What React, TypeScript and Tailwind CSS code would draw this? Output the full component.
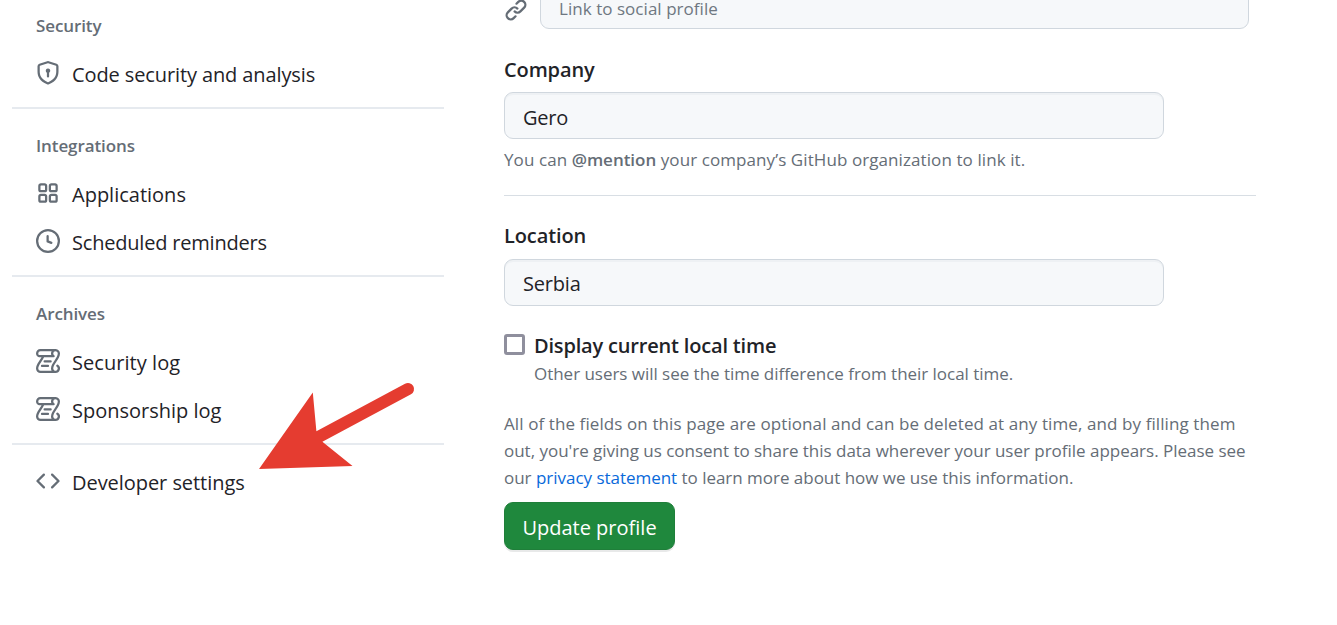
import type { ReactNode } from "react";

const paths = {
  shield:
    "m8.533.133 5.25 1.68A1.75 1.75 0 0 1 15 3.48V7c0 1.566-.32 3.182-1.303 4.682-.983 1.498-2.585 2.813-5.032 3.855a1.697 1.697 0 0 1-1.33 0c-2.447-1.042-4.049-2.357-5.032-3.855C1.32 10.182 1 8.566 1 7V3.48a1.75 1.75 0 0 1 1.217-1.667l5.25-1.68a1.748 1.748 0 0 1 1.066 0Zm-.61 1.429.001.001-5.25 1.68a.251.251 0 0 0-.174.237V7c0 1.36.275 2.666 1.057 3.859.784 1.194 2.121 2.342 4.366 3.298a.196.196 0 0 0 .154 0c2.245-.957 3.582-2.103 4.366-3.297C13.225 9.666 13.5 8.358 13.5 7V3.48a.25.25 0 0 0-.174-.238l-5.25-1.68a.25.25 0 0 0-.153 0ZM9.5 6.5c0 .536-.286 1.032-.75 1.3v2.45a.75.75 0 0 1-1.5 0V7.8A1.5 1.5 0 1 1 9.5 6.5Z",
  apps: "M1.5 3.25c0-.966.784-1.75 1.75-1.75h2.5c.966 0 1.75.784 1.75 1.75v2.5A1.75 1.75 0 0 1 5.75 7.5h-2.5A1.75 1.75 0 0 1 1.5 5.75Zm7 0c0-.966.784-1.75 1.75-1.75h2.5c.966 0 1.75.784 1.75 1.75v2.5a1.75 1.75 0 0 1-1.75 1.75h-2.5A1.75 1.75 0 0 1 8.5 5.75Zm-7 7c0-.966.784-1.75 1.75-1.75h2.5c.966 0 1.75.784 1.75 1.75v2.5a1.75 1.75 0 0 1-1.75 1.75h-2.5a1.75 1.75 0 0 1-1.75-1.75Zm7 0c0-.966.784-1.75 1.75-1.75h2.5c.966 0 1.75.784 1.75 1.75v2.5a1.75 1.75 0 0 1-1.75 1.75h-2.5a1.75 1.75 0 0 1-1.75-1.75ZM3.25 3a.25.25 0 0 0-.25.25v2.5c0 .138.112.25.25.25h2.5A.25.25 0 0 0 6 5.75v-2.5A.25.25 0 0 0 5.75 3Zm7 0a.25.25 0 0 0-.25.25v2.5c0 .138.112.25.25.25h2.5a.25.25 0 0 0 .25-.25v-2.5a.25.25 0 0 0-.25-.25Zm-7 7a.25.25 0 0 0-.25.25v2.5c0 .138.112.25.25.25h2.5a.25.25 0 0 0 .25-.25v-2.5a.25.25 0 0 0-.25-.25Zm7 0a.25.25 0 0 0-.25.25v2.5c0 .138.112.25.25.25h2.5a.25.25 0 0 0 .25-.25v-2.5a.25.25 0 0 0-.25-.25Z",
  clock:
    "M8 0a8 8 0 1 1 0 16A8 8 0 0 1 8 0ZM1.5 8a6.5 6.5 0 1 0 13 0 6.5 6.5 0 0 0-13 0Zm7-3.25v2.992l2.028.812a.75.75 0 0 1-.557 1.392l-2.5-1A.751.751 0 0 1 7 8.25v-3.5a.75.75 0 0 1 1.5 0Z",
  log: "M5 8.25a.75.75 0 0 1 .75-.75h4a.75.75 0 0 1 0 1.5h-4A.75.75 0 0 1 5 8.25ZM4 10.5A.75.75 0 0 0 4 12h4a.75.75 0 0 0 0-1.5H4ZM13-.005c1.654 0 3 1.328 3 3 0 .982-.338 1.933-.783 2.818-.443.879-1.028 1.758-1.582 2.588l-.011.017c-.568.853-1.104 1.659-1.501 2.446-.398.789-.623 1.494-.623 2.136a1.5 1.5 0 1 0 2.333-1.248.75.75 0 0 1 .834-1.246A3 3 0 0 1 13 16H3a3 3 0 0 1-3-3c0-1.582.891-3.135 1.777-4.506.209-.322.418-.637.623-.946.473-.709.923-1.386 1.287-2.048H2.51c-.576 0-1.381-.133-1.907-.783A2.68 2.68 0 0 1 0 2.995a3 3 0 0 1 3-3Zm0 1.5a1.5 1.5 0 0 0-1.5 1.5c0 .476.223.834.667 1.132A.75.75 0 0 1 11.75 5.5H5.368c-.467 1.003-1.141 2.015-1.773 2.963-.192.289-.381.571-.558.845C2.13 10.711 1.5 11.916 1.5 13A1.5 1.5 0 0 0 3 14.5h7.401A2.989 2.989 0 0 1 10 13c0-.979.338-1.928.784-2.812.441-.874 1.023-1.748 1.575-2.576l.017-.026c.568-.853 1.103-1.658 1.501-2.448.398-.79.623-1.497.623-2.143 0-.838-.669-1.5-1.5-1.5Zm-10 0a1.5 1.5 0 0 0-1.5 1.5c0 .321.1.569.27.778.097.12.325.227.74.227h7.674A2.737 2.737 0 0 1 10 2.995c0-.546.146-1.059.401-1.5Z",
  code: "m11.28 3.22 4.25 4.25a.75.75 0 0 1 0 1.06l-4.25 4.25a.749.749 0 0 1-1.275-.326.749.749 0 0 1 .215-.734L13.94 8l-3.72-3.72a.749.749 0 0 1 .326-1.275.749.749 0 0 1 .734.215Zm-6.56 0a.751.751 0 0 1 1.042.018.751.751 0 0 1 .018 1.042L2.06 8l3.72 3.72a.749.749 0 0 1-.326 1.275.749.749 0 0 1-.734-.215L.47 8.53a.75.75 0 0 1 0-1.06Z",
  link: "m7.775 3.275 1.25-1.25a3.5 3.5 0 1 1 4.95 4.95l-2.5 2.5a3.5 3.5 0 0 1-4.95 0 .751.751 0 0 1 .018-1.042.751.751 0 0 1 1.042-.018 1.998 1.998 0 0 0 2.83 0l2.5-2.5a2.002 2.002 0 0 0-2.83-2.83l-1.25 1.25a.751.751 0 0 1-1.042-.018.751.751 0 0 1-.018-1.042Zm-4.69 9.64a1.998 1.998 0 0 0 2.83 0l1.25-1.25a.751.751 0 0 1 1.042.018.751.751 0 0 1 .018 1.042l-1.25 1.25a3.5 3.5 0 1 1-4.95-4.95l2.5-2.5a3.5 3.5 0 0 1 4.95 0 .751.751 0 0 1-.018 1.042.751.751 0 0 1-1.042.018 1.998 1.998 0 0 0-2.83 0l-2.5 2.5a1.998 1.998 0 0 0 0 2.83Z",
};

function Icon({ name, className = "" }: { name: keyof typeof paths; className?: string }) {
  return (
    <svg viewBox="0 0 16 16" className={`shrink-0 fill-[#656d76] ${className}`} aria-hidden="true">
      <path d={paths[name]} />
    </svg>
  );
}

function NavItem({ icon, children, className = "" }: { icon: keyof typeof paths; children: ReactNode; className?: string }) {
  return (
    <a className="flex h-12 items-center pl-6 text-[20px]">
      <Icon name={icon} className="mb-1 mr-3 size-6" />
      <span className={`whitespace-nowrap ${className}`}>{children}</span>
    </a>
  );
}

function NavHeading({ children, className = "" }: { children: ReactNode; className?: string }) {
  return (
    <h3 className={`flex h-[50px] items-center pl-6 text-[17px] font-semibold tracking-[-0.1px] text-[#656d76] ${className}`}>
      {children}
    </h3>
  );
}

function Divider() {
  return <div className="my-2 h-0.5 shrink-0 bg-[#e6eaef]" />;
}

function Field({ label, value, labelClass = "", valueClass = "" }: { label: string; value: string; labelClass?: string; valueClass?: string }) {
  return (
    <div>
      <div className={`flex h-8 items-center text-[20px] font-semibold tracking-[-0.12px] ${labelClass}`}>{label}</div>
      <div className="mt-[7px] flex h-[47px] w-[660px] items-center rounded-[9px] border border-[#d0d7de] bg-[#f6f8fa] px-[18px] pt-[3px] text-[20px] tracking-[-0.2px] shadow-[inset_0_2px_0_rgba(208,215,222,0.2)]">
        <span className={valueClass}>{value}</span>
      </div>
    </div>
  );
}

export default function App() {
  return (
    <div className="relative flex h-[625px] w-[1337px] overflow-hidden bg-white font-['Open_Sans','Noto_Sans',sans-serif] text-[#1f2328]">
      <nav className="ml-3 flex w-[432px] shrink-0 flex-col pt-px">
        <NavHeading>Security</NavHeading>
        <NavItem icon="shield" className="tracking-[-0.11px]">Code security and analysis</NavItem>
        <Divider />
        <NavHeading className="mt-1">Integrations</NavHeading>
        <NavItem icon="apps">Applications</NavItem>
        <NavItem icon="clock" className="tracking-[-0.2px]">Scheduled reminders</NavItem>
        <Divider />
        <NavHeading className="mt-1">Archives</NavHeading>
        <NavItem icon="log" className="tracking-[0.05px]">Security log</NavItem>
        <NavItem icon="log">Sponsorship log</NavItem>
        <Divider />
        <div className="mt-1.5">
          <NavItem icon="code" className="tracking-[-0.05px]">Developer settings</NavItem>
        </div>
      </nav>

      <main className="ml-[60px] w-[752px] shrink-0">
        <div className="flex h-[29px] items-end">
          <Icon name="link" className="mr-3 mb-[7px] size-6" />
          <div className="flex h-[47px] w-[709px] items-center rounded-[9px] border border-[#d0d7de] bg-[#f6f8fa] px-[18px] pt-[5px] text-[17px] leading-none tracking-[0.04px] text-[#6e7781]">
            <span>Link to social profile</span>
          </div>
        </div>

        <div className="pt-6">
          <Field label="Company" value="Gero" labelClass="pt-0.5" valueClass="pt-0.5" />
        </div>
        <p className="mt-[7px] text-[17px] leading-[27px] tracking-[0.085px] text-[#656d76]">
          You can <b className="font-semibold tracking-[-0.02px]">@mention</b> your company’s GitHub organization to link it.
        </p>
        <div className="mt-[22px] h-px bg-[#d8dee4]" />
        <div className="pt-6">
          <Field label="Location" value="Serbia" />
        </div>

        <div className="mt-[27px] flex">
          <div className="mt-px size-[21px] shrink-0 rounded-[3px] border-[3px] border-[#8f8f9d] bg-white" />
          <div className="ml-[9px]">
            <div className="text-[20px] leading-[26px] font-semibold tracking-[-0.18px]">Display current local time</div>
            <div className="mt-px text-[17px] leading-[27px] tracking-[-0.03px] text-[#656d76]">
              Other users will see the time difference from their local time.
            </div>
          </div>
        </div>

        <p className="mt-[23px] text-[17px] leading-[27px] whitespace-nowrap text-[#656d76]">
          <span className="tracking-[0.095px]">
            All of the fields on this page are optional and can be deleted at any time, and by filling them
          </span>
          <br />
          <span className="tracking-[-0.02px]">
            out, you're giving us consent to share this data wherever your user profile appears. Please see
          </span>
          <br />
          <span className="tracking-[-0.025px]">
            our <a className="text-[#0969da]">privacy statement</a> to learn more about how we use this information.
          </span>
        </p>
        <button className="mt-[11px] flex h-12 w-[171px] items-center justify-center rounded-[9px] border border-[#1f7f3a] bg-[#1f883d] pt-1 text-[20px] whitespace-nowrap text-white shadow-[0_2px_0_rgba(31,35,40,0.1)]">
          Update profile
        </button>
      </main>

      <svg className="pointer-events-none absolute top-[380px] left-[256px] h-[92px] w-[162px]" viewBox="256 380 162 92" aria-hidden="true">
        <path d="M259 469 312.8 392.6 316.4 431.2 405 383.8A6 6 0 0 1 411 394.3L322.4 441.7 352.5 466Z" fill="#e53c30" />
      </svg>
    </div>
  );
}
